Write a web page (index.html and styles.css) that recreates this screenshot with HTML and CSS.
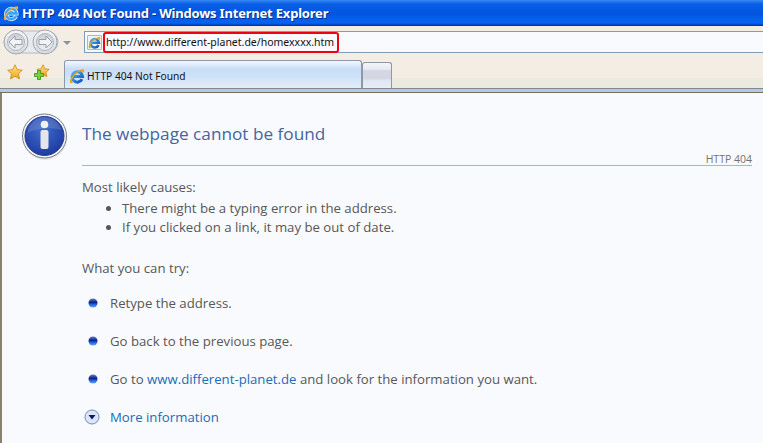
FILE: index.html
```html
<!DOCTYPE html>
<html lang="en">
<head>
<meta charset="utf-8">
<title>HTTP 404 Not Found</title>
<link rel="stylesheet" href="styles.css">
</head>
<body>
<svg class="defs" width="0" height="0" aria-hidden="true">
  <defs>
    <linearGradient id="ieg" x1="0" y1="0" x2="1" y2="1"><stop offset="0" stop-color="#4fb4f5"/><stop offset="1" stop-color="#0a55b8"/></linearGradient>
    <symbol id="ie" viewBox="0 0 16 16">
      <path d="M13 11.200A5.200 5.200 0 1 1 13.500 8.400H4" fill="none" stroke="url(#ieg)" stroke-width="3"/>
      <path d="M1.200 14.800C-.4 12.500 4 5.800 8.600 3.200c3-1.700 5.800-2.500 6.500-1.300.5.900-.4 2.500-1.500 3.700.2-1.100-.2-2.400-1.400-2.400C8.800 3.200 3.200 9 2.900 12.700c-.1 1.100.5 1.500 1.500 1.500-1 .8-2.500 1.300-3.200.6z" fill="#e8a41e"/>
    </symbol>
    <symbol id="ie-light" viewBox="0 0 16 16">
      <path d="M13 11.200A5.200 5.200 0 1 1 13.500 8.400H4" fill="none" stroke="#e8f4ff" stroke-width="4"/>
      <path d="M13 11.200A5.200 5.200 0 1 1 13.500 8.400H4" fill="none" stroke="#3aa4f0" stroke-width="2.600"/>
      <path d="M1.200 14.800C-.4 12.500 4 5.800 8.600 3.200c3-1.700 5.800-2.500 6.500-1.300.5.900-.4 2.500-1.500 3.700.2-1.100-.2-2.400-1.400-2.400C8.800 3.200 3.200 9 2.900 12.700c-.1 1.100.5 1.500 1.500 1.500-1 .8-2.500 1.300-3.200.6z" fill="#f2b02a"/>
    </symbol>
    <linearGradient id="star" x1="0" y1="0" x2="0" y2="1"><stop offset="0" stop-color="#ffe98a"/><stop offset="1" stop-color="#f0a018"/></linearGradient>
    <radialGradient id="orb" cx=".45" cy=".35" r=".75"><stop offset="0" stop-color="#3f6ccb"/><stop offset="1" stop-color="#1a349c"/></radialGradient>
    <linearGradient id="btn" x1="0" y1="0" x2="0" y2="1"><stop offset="0" stop-color="#f4f5f8"/><stop offset="1" stop-color="#d5d9df"/></linearGradient>
    <linearGradient id="btn2" x1="0" y1="0" x2="0" y2="1"><stop offset="0" stop-color="#c9ced6"/><stop offset="1" stop-color="#eef0f3"/></linearGradient>
    <linearGradient id="dot" x1="0" y1="0" x2="0" y2="1"><stop offset="0" stop-color="#5a7fc8"/><stop offset=".45" stop-color="#0c1f8c"/><stop offset=".6" stop-color="#1a56d8"/><stop offset="1" stop-color="#62a8ea"/></linearGradient>
    <symbol id="bullet" viewBox="0 0 10 10"><circle cx="5" cy="5" r="4.500" fill="url(#dot)"/></symbol>
  </defs>
</svg>

<div class="window">
  <header class="titlebar">
    <svg class="ie-title"><use href="#ie-light"/></svg>
    <span class="title-text">HTTP 404 Not Found - Windows Internet Explorer</span>
  </header>

  <div class="chrome">
    <div class="navrow">
      <svg class="navbtns" width="56" height="26" viewBox="0 0 56 26">
        <rect x="1" y="2" width="54" height="22" rx="11" fill="#e8eaee" stroke="#b4b8bf"/>
        <circle cx="13" cy="13" r="12" fill="url(#btn)" stroke="#a3a8b0"/>
        <circle cx="13" cy="13" r="8.500" fill="url(#btn2)" stroke="#b0b5bd"/>
        <circle cx="42" cy="13" r="12" fill="url(#btn)" stroke="#a3a8b0"/>
        <circle cx="42" cy="13" r="8.500" fill="url(#btn2)" stroke="#b0b5bd"/>
        <path d="M6 13l6-6v3.500h7v5h-7V19z" fill="#f2f3f5" stroke="#9a9fa7"/>
        <path d="M49 13l-6-6v3.500h-7v5h7V19z" fill="#f2f3f5" stroke="#9a9fa7"/>
      </svg>
      <svg class="navdrop" width="8" height="4" viewBox="0 0 8 4"><path d="M0 0h8L4 4z" fill="#8d9199"/></svg>
      <div class="addressbar">
        <span class="pageicon"><svg class="ie-small"><use href="#ie"/></svg></span>
        <span class="url">http://www.different-planet.de/homexxxx.htm</span>
      </div>
    </div>
    <div class="tabrow">
      <svg class="favstar" viewBox="0 0 16 16"><path d="M8 .8l2.200 4.800 5.100.6-3.800 3.500 1 5.200L8 12.300l-4.500 2.600 1-5.200L.7 6.200l5.100-.6z" fill="url(#star)" stroke="#c98a1c" stroke-width=".8"/></svg>
      <svg class="favadd" viewBox="0 0 16 16">
        <path d="M9 .8l1.800 4 4.400.5-3.200 3 .8 4.400L9 10.500l-3.800 2.200.8-4.400-3.200-3 4.400-.5z" fill="url(#star)" stroke="#c98a1c" stroke-width=".8"/>
        <path d="M3.500 6.500h3v3h3v3h-3v3h-3v-3h-3v-3h3z" fill="#7fd13b" stroke="#2f8f1d" stroke-width=".8"/>
      </svg>
      <div class="tab tab-active">
        <svg class="ie-tab"><use href="#ie"/></svg>
        <span class="tab-label">HTTP 404 Not Found</span>
      </div>
      <div class="tab tab-new"></div>
    </div>
    <div class="chrome-edge"></div>
  </div>

  <main class="page">
    <svg class="infoicon" viewBox="0 0 46 47">
      <circle cx="23" cy="25" r="22" fill="#b9bcc2" opacity=".35"/>
      <circle cx="22.500" cy="23" r="22" fill="#f3f4f6" stroke="#777c85"/>
      <circle cx="22.500" cy="23" r="19.500" fill="url(#orb)" stroke="#28398c"/>
      <path d="M5 20C8 9 15 4 22.500 4c8 0 14 5 17 13-10-3-24-2-34.500 3z" fill="#fff" opacity=".14"/>
      <circle cx="22.500" cy="11.500" r="3.800" fill="#eef0f5"/>
      <rect x="18.500" y="17" width="8" height="19" rx="2" fill="#e4e6ee"/>
    </svg>
    <div class="pagebody">
      <h1 class="heading">The webpage cannot be found</h1>
      <div class="errorcode">HTTP 404</div>
      <p class="lead">Most likely causes:</p>
      <ul class="causes">
        <li>There might be a typing error in the address.</li>
        <li>If you clicked on a link, it may be out of date.</li>
      </ul>
      <p class="try">What you can try:</p>
      <div class="action"><svg class="actdot"><use href="#bullet"/></svg><span>Retype the address.</span></div>
      <div class="action"><svg class="actdot"><use href="#bullet"/></svg><span>Go back to the previous page.</span></div>
      <div class="action"><svg class="actdot"><use href="#bullet"/></svg><span>Go to <a href="#">www.different-planet.de</a> and look for the information you want.</span></div>
      <div class="action more">
        <svg class="moreicon" viewBox="0 0 16 16">
          <circle cx="8" cy="8" r="7" fill="#dbe7f7" stroke="#6f8fb8"/>
          <path d="M4.500 6h7L8 10.500z" fill="#0a1a70"/>
        </svg>
        <a href="#">More information</a>
      </div>
    </div>
  </main>
</div>
</body>
</html>
```

FILE: styles.css
```css
* { box-sizing: border-box; }

html, body {
  margin: 0;
  padding: 0;
  height: 100%;
  overflow: hidden;
  background: #f9fafd;
}

.defs { display: block; height: 0; }

.window {
  width: 763px;
  height: 443px;
  display: flex;
  flex-direction: column;
  overflow: hidden;
}

.titlebar {
  flex: 0 0 26px;
  display: flex;
  align-items: center;
  padding-left: 3px;
  gap: 3px;
  background: linear-gradient(#3a8cf4 0, #1f74ec 2px, #0a5fe6 4px, #0254de 14px, #045fe8 18px, #0663f2 23px, #0040c0 25px, #00259a 26px);
}

.ie-title { width: 16px; height: 18px; flex: none; }

.title-text {
  font: 700 13px "Noto Sans", sans-serif;
  letter-spacing: -.2px;
  color: #fff;
  text-shadow: 1px 1px 0 #0a2f8c;
  white-space: nowrap;
}

.chrome {
  flex: 0 0 67px;
  display: flex;
  flex-direction: column;
  background: linear-gradient(#f4ede3 0, #f4ede3 52px, #ebeadf 52px);
}

.navrow {
  flex: 0 0 34px;
  display: flex;
  align-items: flex-start;
  padding-top: 3px;
  padding-left: 3px;
}

.navbtns { flex: none; }

.navdrop { flex: none; margin: 12px 0 0 4px; }

.addressbar {
  flex: 1;
  height: 22px;
  margin: 2px 0 0 13px;
  display: flex;
  align-items: center;
  background: #f8fafd;
  border: 1px solid #7f9db9;
  border-right: 0;
  padding-left: 2px;
}

.pageicon {
  width: 15px;
  height: 15px;
  flex: none;
  background: #f6f4ea;
  border: 1px solid #b9b5a6;
  border-radius: 1px;
  display: flex;
}

.ie-small { width: 13px; height: 13px; }

.url {
  margin-left: 1px;
  height: 21px;
  display: flex;
  align-items: center;
  padding: 0 3px 0 1px;
  border: 2px solid #f00010;
  border-radius: 3px;
  background: #f8fafd;
  font: 10.500px "Noto Sans", sans-serif;
  color: #111;
  white-space: nowrap;
}

.tabrow {
  flex: 0 0 28px;
  display: flex;
  align-items: flex-end;
  padding-left: 7px;
  border-bottom: 1px solid #85878d;
}

.favstar { width: 16px; height: 16px; flex: none; margin: 0 0 8px 0; }
.favadd { width: 16px; height: 16px; flex: none; margin: 0 0 8px 11px; }

.tab {
  border: 1px solid #8f98a6;
  border-bottom: 0;
  border-radius: 3px 3px 0 0;
}

.tab-active {
  width: 298px;
  height: 28px;
  margin-left: 14px;
  display: flex;
  align-items: center;
  padding: 2px 0 0 4px;
  gap: 2px;
  background: linear-gradient(#f3f8fd 0, #c8def7 8px, #cfe2f8 16px, #e3edf8 100%);
}

.ie-tab { width: 16px; height: 16px; flex: none; }

.tab-label {
  font: 10.200px "Noto Sans", sans-serif;
  color: #111;
  white-space: nowrap;
}

.tab-new {
  width: 30px;
  height: 26px;
  background: linear-gradient(#f3f4f7 0, #e6eaf2 6px, #d4d7e2 8px, #d4d7e2 16px, #dfe6f3 17px, #e8edf5 100%);
}

.chrome-edge {
  flex: 0 0 4px;
  background: linear-gradient(#b1c9ec 0, #b1c9ec 3px, #75715f 3px);
}

.page {
  flex: 1;
  display: flex;
  align-items: flex-start;
  padding: 20px 11px 0 22px;
  background: #f9fafd;
  border-left: 2px solid #85826f;
  margin: 0;
  font: 13.200px "Open Sans", sans-serif;
  color: #575757;
}

.infoicon { width: 46px; height: 47px; flex: none; margin-left: -2px; }

.pagebody { flex: 1; margin-left: 14px; min-width: 0; }

.heading {
  margin: 9px 0 0;
  font: 400 17.200px/24px "Open Sans", sans-serif;
  color: #4465a2;
  height: 34px;
}

.errorcode {
  border-bottom: 1px solid #a9b4c4;
  text-align: right;
  font-size: 10.500px;
  line-height: 14px;
  height: 14px;
  margin-top: -4px;
  color: #727272;
}

.lead { margin: 12px 0 0; line-height: 19px; }

.causes {
  margin: 2px 0 0;
  padding: 0 0 0 40px;
  line-height: 19px;
}

.try { margin: 22px 0 0; line-height: 19px; }

.action {
  display: flex;
  align-items: center;
  height: 19px;
  margin-top: 19px;
}

.try + .action { margin-top: 15px; }

.actdot { width: 10px; height: 10px; flex: none; margin: 0 12px 0 6px; }

.moreicon { width: 16px; height: 16px; flex: none; margin-right: 10px; margin-left: 2px; }

a { color: #1a6cb8; text-decoration: none; }
```
